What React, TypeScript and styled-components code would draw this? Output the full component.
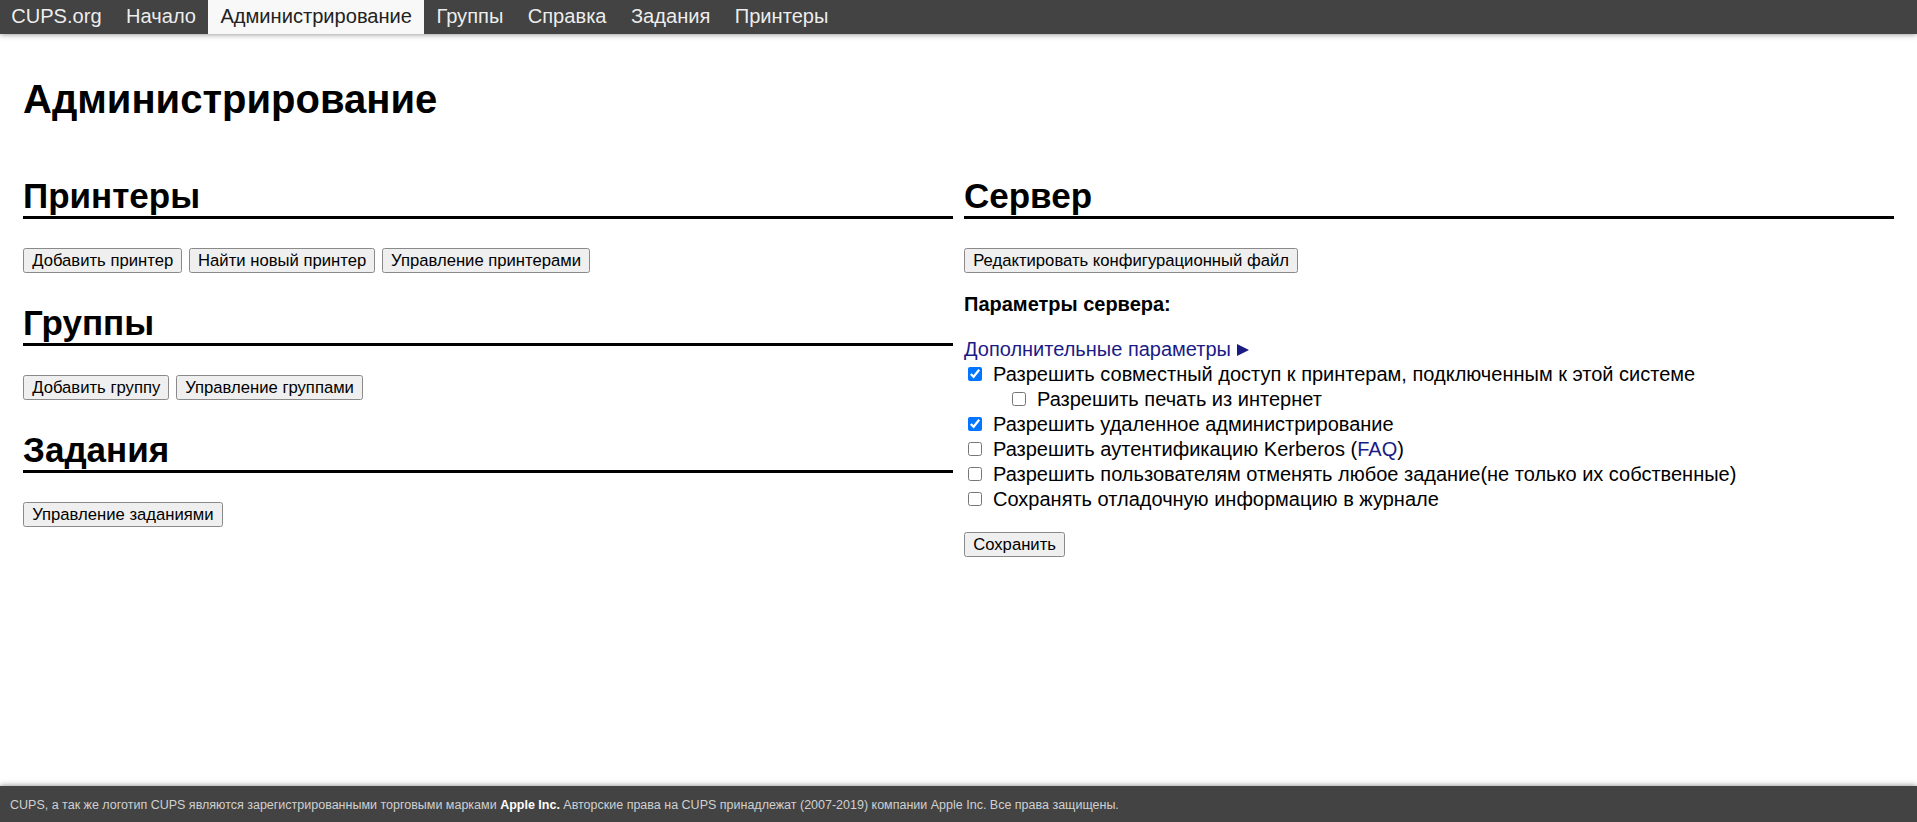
import React from "react";
import styled, { createGlobalStyle } from "styled-components";

const GlobalStyle = createGlobalStyle`
  html, body {
    margin: 0;
    padding: 0;
    background: #ffffff;
  }
  body {
    font-family: "Liberation Sans", Arial, sans-serif;
    font-size: 20px;
    color: #000;
  }
`;

const Page = styled.div`
  min-height: 100vh;
  display: flex;
  flex-direction: column;
`;

const Header = styled.nav`
  height: 34px;
  background: #434343;
  box-shadow: 0 0 6px rgba(0, 0, 0, 0.5);
  display: flex;
  align-items: stretch;
  position: relative;
  z-index: 2;
`;

const NavLink = styled.a<{ $active?: boolean }>`
  display: block;
  height: 34px;
  box-sizing: border-box;
  padding: 0 12.2px 2px;
  line-height: 32px;
  font-size: 20.1px;
  text-decoration: none;
  white-space: nowrap;
  color: ${(p) => (p.$active ? "#222" : "rgba(255,255,255,0.92)")};
  background: ${(p) => (p.$active ? "#f8f8f8" : "transparent")};

  &:first-child {
    margin-left: -1px;
  }
`;

const Main = styled.main`
  flex: 1;
  padding: 41px 23px 0;
`;

const Title = styled.h1`
  margin: 0;
  font-size: 40px;
  line-height: 48px;
  font-weight: bold;
`;

const Columns = styled.div`
  margin-top: 53px;
  display: grid;
  grid-template-columns: 1fr 1fr;
  column-gap: 11px;
  align-items: start;
`;

const Column = styled.div`
  display: flex;
  flex-direction: column;
`;

const Section = styled.section`
  & + & {
    margin-top: 30px;
  }
`;

const SectionTitle = styled.h2`
  margin: 0;
  font-size: 35px;
  line-height: 40px;
  font-weight: bold;
  border-bottom: 3px solid #000;
`;

const ButtonRow = styled.div<{ $top?: number }>`
  margin-top: ${(p) => p.$top ?? 29}px;
  display: flex;
  gap: 6.5px;
`;

const Button = styled.button`
  font-family: "Liberation Sans", Arial, sans-serif;
  font-size: 16.67px;
  line-height: 19px;
  height: 25px;
  box-sizing: border-box;
  padding: 2px 8.2px;
  border: 1px solid #8a8a8a;
  border-radius: 2.5px;
  background: #efefef;
  color: #000;
  white-space: nowrap;
  cursor: default;
`;

const ParamLabel = styled.div`
  margin-top: 18.6px;
  font-weight: bold;
  font-size: 20px;
  line-height: 25px;
`;

const MoreLink = styled.a`
  margin-top: 19.7px;
  display: flex;
  align-items: center;
  height: 26px;
  line-height: 25px;
  color: #1b1b86;
  text-decoration: none;
  font-size: 20px;
`;

const Triangle = styled.span`
  display: inline-block;
  width: 0;
  height: 0;
  margin-left: 6px;
  margin-top: 1px;
  border-left: 12px solid #1b1b86;
  border-top: 6px solid transparent;
  border-bottom: 6px solid transparent;
`;

const Row = styled.label<{ $indent?: number }>`
  display: flex;
  align-items: flex-start;
  height: 25px;
  padding-left: ${(p) => p.$indent ?? 0}px;
`;

const Check = styled.input`
  width: 14px;
  height: 14px;
  margin: 5px 0 0 4px;
  flex: none;
`;

const RowText = styled.span`
  padding-left: 11px;
  line-height: 25px;
  font-size: 20px;
  white-space: nowrap;
`;

const InlineLink = styled.a`
  color: #1b1b86;
  text-decoration: none;
`;

const Footer = styled.footer`
  height: 36px;
  box-sizing: border-box;
  padding: 2px 10px 0;
  line-height: 34px;
  background: #434343;
  box-shadow: 0 0 6px rgba(0, 0, 0, 0.5);
  color: #d0d0d0;
  font-size: 12.5px;
  white-space: nowrap;
  position: relative;
`;

const FooterStrong = styled.b`
  color: #ffffff;
`;

const navItems = [
  "CUPS.org",
  "Начало",
  "Администрирование",
  "Группы",
  "Справка",
  "Задания",
  "Принтеры",
];

const options: { text: React.ReactNode; checked: boolean; indent?: number }[] = [
  { text: "Разрешить совместный доступ к принтерам, подключенным к этой системе", checked: true },
  { text: "Разрешить печать из интернет", checked: false, indent: 44 },
  { text: "Разрешить удаленное администрирование", checked: true },
  {
    text: (
      <>
        Разрешить аутентификацию Kerberos (<InlineLink href="#">FAQ</InlineLink>)
      </>
    ),
    checked: false,
  },
  { text: "Разрешить пользователям отменять любое задание(не только их собственные)", checked: false },
  { text: "Сохранять отладочную информацию в журнале", checked: false },
];

export default function App() {
  return (
    <Page>
      <GlobalStyle />
      <Header>
        {navItems.map((n) => (
          <NavLink key={n} href="#" $active={n === "Администрирование"}>
            {n}
          </NavLink>
        ))}
      </Header>
      <Main>
        <Title>Администрирование</Title>
        <Columns>
          <Column>
            <Section>
              <SectionTitle>Принтеры</SectionTitle>
              <ButtonRow>
                <Button>Добавить принтер</Button>
                <Button>Найти новый принтер</Button>
                <Button>Управление принтерами</Button>
              </ButtonRow>
            </Section>
            <Section>
              <SectionTitle>Группы</SectionTitle>
              <ButtonRow>
                <Button>Добавить группу</Button>
                <Button>Управление группами</Button>
              </ButtonRow>
            </Section>
            <Section>
              <SectionTitle>Задания</SectionTitle>
              <ButtonRow>
                <Button>Управление заданиями</Button>
              </ButtonRow>
            </Section>
          </Column>
          <Column>
            <SectionTitle>Сервер</SectionTitle>
            <ButtonRow>
              <Button>Редактировать конфигурационный файл</Button>
            </ButtonRow>
            <ParamLabel>Параметры сервера:</ParamLabel>
            <MoreLink href="#">
              Дополнительные параметры
              <Triangle />
            </MoreLink>
            {options.map((o, i) => (
              <Row key={i} $indent={o.indent}>
                <Check type="checkbox" defaultChecked={o.checked} />
                <RowText>{o.text}</RowText>
              </Row>
            ))}
            <ButtonRow $top={19.4}>
              <Button>Сохранить</Button>
            </ButtonRow>
          </Column>
        </Columns>
      </Main>
      <Footer>
        CUPS, а так же логотип CUPS являются зарегистрированными торговыми марками{" "}
        <FooterStrong>Apple Inc.</FooterStrong> Авторские права на CUPS принадлежат
        (2007-2019) компании Apple Inc. Все права защищены.
      </Footer>
    </Page>
  );
}
